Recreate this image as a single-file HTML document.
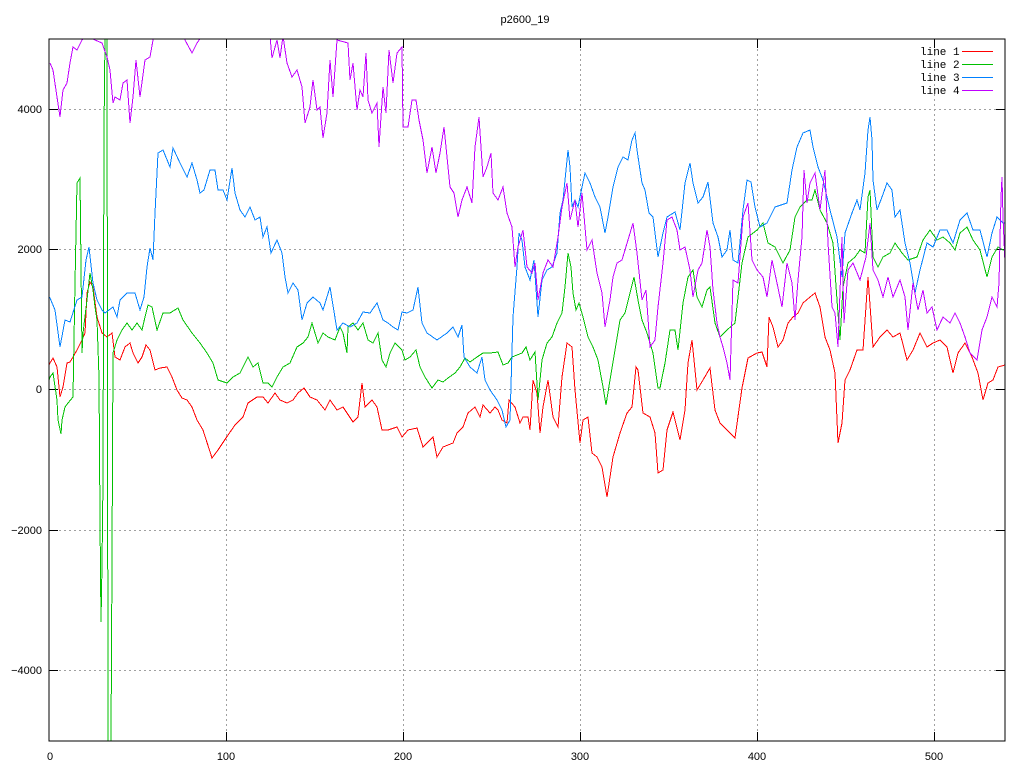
<!DOCTYPE html>
<html><head><meta charset="utf-8"><style>
html,body{margin:0;padding:0;background:#fff;}
svg{display:block;}
text{font-family:"Liberation Sans",sans-serif;font-size:11px;fill:#000;}
.m{font-family:"Liberation Mono",monospace;font-size:11px;}
.g{stroke:#a0a0a0;stroke-width:1;stroke-dasharray:2,3;fill:none;}
.d{fill:none;stroke-width:1;stroke-linejoin:miter;shape-rendering:crispEdges;}
</style></head><body>
<svg width="1024" height="768" viewBox="0 0 1024 768">
<defs><clipPath id="c"><rect x="49" y="39" width="956" height="702"/></clipPath></defs>
<rect width="1024" height="768" fill="#fff"/>
<g class="g">
<line x1="49" y1="109.5" x2="1005" y2="109.5"/>
<line x1="49" y1="249.5" x2="1005" y2="249.5"/>
<line x1="49" y1="389.5" x2="1005" y2="389.5"/>
<line x1="49" y1="530.5" x2="1005" y2="530.5"/>
<line x1="49" y1="670.5" x2="1005" y2="670.5"/>
<line x1="226.5" y1="39" x2="226.5" y2="741"/>
<line x1="403.5" y1="39" x2="403.5" y2="741"/>
<line x1="580.5" y1="39" x2="580.5" y2="741"/>
<line x1="757.5" y1="39" x2="757.5" y2="741"/>
<line x1="934.5" y1="39" x2="934.5" y2="741"/>
</g>
<g stroke="#000" stroke-width="1">
<line x1="49" y1="109.5" x2="58" y2="109.5"/><line x1="996" y1="109.5" x2="1005" y2="109.5"/>
<line x1="49" y1="249.5" x2="58" y2="249.5"/><line x1="996" y1="249.5" x2="1005" y2="249.5"/>
<line x1="49" y1="389.5" x2="58" y2="389.5"/><line x1="996" y1="389.5" x2="1005" y2="389.5"/>
<line x1="49" y1="530.5" x2="58" y2="530.5"/><line x1="996" y1="530.5" x2="1005" y2="530.5"/>
<line x1="49" y1="670.5" x2="58" y2="670.5"/><line x1="996" y1="670.5" x2="1005" y2="670.5"/>
<line x1="226.5" y1="39" x2="226.5" y2="48"/><line x1="226.5" y1="732" x2="226.5" y2="741"/>
<line x1="403.5" y1="39" x2="403.5" y2="48"/><line x1="403.5" y1="732" x2="403.5" y2="741"/>
<line x1="580.5" y1="39" x2="580.5" y2="48"/><line x1="580.5" y1="732" x2="580.5" y2="741"/>
<line x1="757.5" y1="39" x2="757.5" y2="48"/><line x1="757.5" y1="732" x2="757.5" y2="741"/>
<line x1="934.5" y1="39" x2="934.5" y2="48"/><line x1="934.5" y1="732" x2="934.5" y2="741"/>
</g>
<g clip-path="url(#c)">
<polyline class="d" stroke="#ff0000" points="49,365 50,363 53,358 57,367 60,397 63,387 67,363 70,362 73,357 77,350 82,340 85,333 87,293 90,282 93,287 97,317 102,333 107,337 112,333 115,357 120,360 125,347 130,343 133,353 138,363 142,357 146,345 150,350 155,370 160,368 167,367 172,377 177,390 182,398 187,400 192,407 197,420 203,430 212,458 218,450 226,438 235,425 243,417 248,403 257,397 263,397 268,403 275,393 280,400 287,403 293,400 298,393 304,388 310,397 317,400 325,410 330,400 337,410 343,407 353,422 358,417 362,383 365,407 372,400 377,407 382,430 388,430 397,427 402,437 408,430 417,428 423,447 433,437 437,457 443,447 453,443 457,433 463,427 468,413 475,407 480,417 483,405 490,413 495,407 498,410 502,420 507,423 509,400 515,407 520,423 523,417 528,417 530,430 533,380 537,393 540,433 543,407 548,380 553,417 558,427 562,377 567,343 572,347 575,390 580,443 583,420 588,417 592,453 597,457 602,467 607,497 613,457 620,433 627,413 632,407 636,367 638,370 643,413 650,417 655,433 658,473 663,470 667,430 673,412 680,440 685,410 688,363 692,340 697,390 703,380 710,368 715,410 720,423 727,430 735,438 742,388 748,358 757,353 762,352 767,367 769,317 773,327 778,347 783,340 788,323 793,317 798,313 803,303 810,297 815,293 820,307 825,337 830,350 835,373 838,443 842,423 845,380 850,370 857,350 863,350 868,277 873,347 880,337 887,330 893,337 900,333 907,360 913,350 920,333 927,347 933,343 940,340 947,347 953,373 958,353 965,343 972,357 978,373 983,400 988,383 993,380 998,367 1005,365"/>
<polyline class="d" stroke="#00c000" points="49,380 50,377 53,373 57,400 58,420 61,434 62,420 65,407 68,403 73,397 75,283 77,183 80,178 82,353 83,333 87,300 90,273 93,290 95,307 97,320 99,377 100,520 101,622 102,565 103,480 104,130 105,38 107,38 108,741 111,741 112,560 113,353 117,340 122,330 127,323 132,330 137,323 142,330 145,317 148,305 152,307 157,330 163,313 170,313 178,308 183,320 192,333 200,343 207,353 213,363 218,380 227,383 233,377 240,373 248,357 253,367 258,363 263,383 268,383 272,387 277,377 283,367 290,363 297,347 303,343 308,337 312,323 318,343 323,333 328,337 335,340 340,327 343,333 347,353 348,327 353,323 358,330 363,323 368,340 373,343 378,333 382,360 386,367 390,353 395,343 402,350 405,360 410,357 416,350 420,367 425,377 432,388 438,380 443,382 448,378 455,373 460,367 465,358 470,362 477,357 483,353 490,353 498,352 503,365 508,363 512,357 517,355 522,353 526,347 530,360 535,352 538,400 542,360 547,343 552,337 557,323 562,313 565,287 568,253 571,267 573,293 576,310 579,303 583,317 588,337 593,347 598,360 603,387 606,405 610,380 615,350 620,320 625,313 630,293 634,277 638,300 642,320 647,333 653,353 658,388 660,388 665,363 670,330 675,330 678,350 683,303 688,277 693,270 697,297 702,307 707,290 710,287 715,323 720,337 727,330 735,323 742,263 748,237 757,230 763,223 768,243 775,247 783,263 790,250 795,217 800,207 807,200 812,200 815,190 820,210 827,223 833,243 837,300 840,340 843,287 848,263 855,257 860,250 865,253 868,197 870,190 873,257 878,267 883,257 890,253 895,243 902,253 908,260 917,257 923,240 930,230 937,240 943,237 950,243 955,250 960,233 967,227 973,240 980,250 987,277 992,257 998,247 1003,250 1005,250"/>
<polyline class="d" stroke="#0080ff" points="49,297 50,298 55,310 60,347 65,320 70,322 77,300 82,297 86,260 89,247 93,283 97,300 102,310 105,313 113,307 117,317 120,300 127,293 135,293 140,310 144,297 147,267 150,248 153,260 155,213 157,173 158,153 163,150 170,167 173,148 180,163 187,177 192,163 197,180 200,193 204,190 210,170 215,170 218,190 223,190 227,200 232,168 235,193 240,210 245,217 250,207 255,220 260,217 263,237 267,227 271,253 277,240 282,253 285,277 288,293 293,283 298,290 302,320 307,303 313,297 320,303 323,310 330,287 337,330 343,323 350,327 357,323 363,312 370,313 377,303 383,320 388,323 393,327 398,330 402,312 407,313 413,310 418,287 422,323 427,333 437,340 447,333 453,327 458,337 462,325 464,357 470,367 477,373 482,357 485,380 490,390 497,400 502,410 506,427 510,420 513,317 517,267 519,233 522,240 525,267 530,280 534,260 538,317 542,280 547,270 552,267 557,253 560,213 563,200 568,150 570,167 572,207 575,200 578,207 582,187 585,173 590,183 595,197 600,207 605,233 608,217 613,187 618,167 623,157 628,160 632,140 635,133 637,150 642,183 645,190 649,213 653,217 658,257 663,233 667,217 675,212 680,230 685,183 690,163 693,183 698,203 703,197 708,182 713,223 718,237 722,257 727,250 730,230 733,260 738,263 743,210 747,180 751,182 755,207 760,227 767,223 775,207 787,203 792,170 797,147 803,133 810,130 813,147 818,167 823,180 830,210 837,237 842,277 845,233 852,213 857,200 860,210 865,173 868,130 870,117 872,140 873,180 877,210 882,197 887,183 892,190 895,217 900,210 905,243 910,263 915,293 920,270 927,243 933,247 940,230 947,230 953,243 960,220 967,213 973,230 980,230 987,257 992,233 997,217 1003,223 1005,223"/>
<polyline class="d" stroke="#c000ff" points="50,63 53,70 57,97 60,117 63,90 67,83 70,63 73,47 77,50 82,40 87,36 95,40 102,43 107,57 110,70 113,103 115,97 120,100 123,83 127,80 130,123 133,97 136,60 140,97 145,60 150,57 153,40 155,30 183,30 185,40 192,53 197,43 202,36 270,36 272,58 277,40 280,58 283,36 287,63 292,77 297,70 302,87 305,123 310,107 313,80 317,110 320,107 323,138 327,113 330,60 333,97 337,40 348,43 350,80 353,63 357,110 360,90 363,97 366,53 368,100 372,113 377,103 379,147 383,87 386,113 389,50 393,83 397,53 402,47 403,127 408,127 412,100 416,100 419,120 423,140 427,173 432,147 436,173 440,153 444,127 447,157 450,187 454,193 458,217 462,200 467,187 472,203 475,147 479,117 483,177 487,167 491,153 493,193 498,200 503,187 507,213 512,227 515,267 518,247 523,230 527,267 532,273 535,263 538,300 543,273 548,260 553,267 558,237 562,207 567,183 570,220 575,200 578,227 582,193 587,250 592,240 597,273 602,293 605,327 610,300 613,277 617,263 622,260 628,240 633,223 637,253 642,300 646,290 650,347 655,340 658,307 663,263 667,220 672,217 677,230 680,250 685,247 690,270 693,297 698,270 702,263 707,230 710,247 713,290 717,323 720,337 723,347 727,363 730,380 733,280 738,283 743,217 748,203 752,260 757,270 763,277 767,297 772,260 777,283 782,307 787,263 792,283 795,320 798,280 802,237 804,170 807,203 810,183 815,173 820,210 825,170 828,243 832,307 835,313 838,347 842,237 844,323 848,270 853,263 860,280 866,257 870,223 873,270 878,280 883,297 888,277 893,297 900,280 905,297 908,330 913,283 918,310 923,290 927,313 932,307 937,330 943,317 950,323 955,313 960,323 965,337 970,353 977,360 982,330 987,317 992,297 997,307 999,283 1001,197 1002,177 1003,217 1005,263"/>
</g>
<rect x="49" y="39" width="956" height="702" fill="none" stroke="#000" stroke-width="1"/>
<text x="525" y="23" text-anchor="middle">p2600_19</text>
<g text-anchor="end">
<text x="42" y="113">4000</text>
<text x="42" y="253">2000</text>
<text x="42" y="393">0</text>
<text x="42" y="534">−2000</text>
<text x="42" y="674">−4000</text>
</g>
<g text-anchor="middle">
<text x="50" y="760">0</text>
<text x="226" y="760">100</text>
<text x="403" y="760">200</text>
<text x="580" y="760">300</text>
<text x="757" y="760">400</text>
<text x="934" y="760">500</text>
</g>
<text class="m" x="920" y="55">line 1</text>
<text class="m" x="920" y="68">line 2</text>
<text class="m" x="920" y="81">line 3</text>
<text class="m" x="920" y="94">line 4</text>
<line x1="962" y1="51.5" x2="993" y2="51.5" stroke="#ff0000"/>
<line x1="962" y1="64.5" x2="993" y2="64.5" stroke="#00c000"/>
<line x1="962" y1="77.5" x2="993" y2="77.5" stroke="#0080ff"/>
<line x1="962" y1="90.5" x2="993" y2="90.5" stroke="#c000ff"/>
</svg>
</body></html>
